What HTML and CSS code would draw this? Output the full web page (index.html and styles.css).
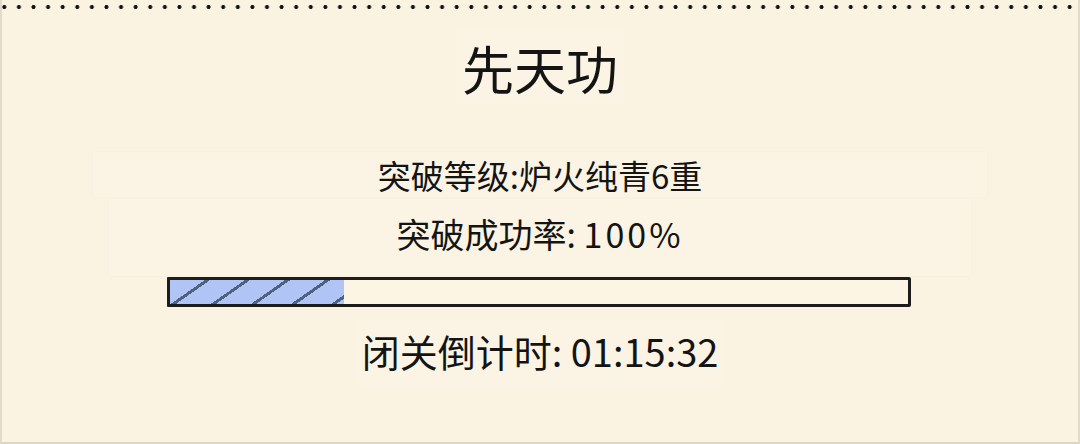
FILE: index.html
```html
<!DOCTYPE html>
<html lang="zh-CN">
<head>
    <meta charset="UTF-8">
    <title>先天功</title>
    <link rel="stylesheet" href="styles.css">
</head>
<body>
    <div class="panel">
        <div class="dots"></div>

        <div class="skill-name">先天功</div>

        <div class="info-row level">突破等级:炉火纯青6重</div>
        <div class="info-row rate">突破成功率: <span class="num" id="rate">100%</span></div>

        <div class="progress">
            <div class="progress-fill" style="width: 23.6%"></div>
        </div>

        <div class="countdown">闭关倒计时: <span id="timer">01:15:32</span></div>
    </div>
</body>
</html>
```

FILE: styles.css
```css
body {
    margin: 0;
    background-color: #faf3e2;
    font-family: "Noto Sans CJK SC", "Noto Sans", sans-serif;
    color: #141414;
}
.panel {
    height: 444px;
    box-sizing: border-box;
    border-left: 2px solid #e2dbc9;
    border-right: 2px solid #e2dbc9;
    border-bottom: 2px solid #ddd6c4;
    display: flex;
    flex-direction: column;
    align-items: center;
}
/* 顶部虚线 */
.dots {
    align-self: stretch;
    height: 14px;
    background-image: radial-gradient(circle, #111 1.7px, transparent 2.3px);
    background-size: 14.6px 14px;
    background-position: -5px 0;
}
.skill-name {
    margin-top: 16px;
    height: 75px;
    line-height: 75px;
    padding: 0 6px;
    font-size: 52px;
    background-color: #fbf4e5;
}
.info-row {
    text-align: center;
    background-color: #fbf4e4;
    border: 1px solid rgba(0, 0, 0, 0.012);
    box-sizing: border-box;
}
.level {
    margin-top: 46px;
    width: 896px;
    height: 47px;
    line-height: 47px;
    font-size: 33px;
}
.rate {
    width: 864px;
    height: 79px;
    line-height: 70px;
    font-size: 34px;
}
.num {
    letter-spacing: 3px;
}
.progress {
    width: 744px;
    height: 30px;
    box-sizing: border-box;
    border: 3px solid #1c1c1c;
    border-radius: 1px 2px 2px 1px;
    background-color: #fcf5e4;
    margin-left: -2px;
}
.progress-fill {
    height: 100%;
    background-color: #b1c4f6;
    background-image: repeating-linear-gradient(145deg,
        transparent 0, transparent 20px,
        rgba(45, 65, 85, 0.75) 20px, rgba(45, 65, 85, 0.75) 23px);
}
.countdown {
    margin-top: 12px;
    height: 68px;
    line-height: 64px;
    padding: 0 4px;
    font-size: 38px;
    background-color: #fbf4e5;
}
```
